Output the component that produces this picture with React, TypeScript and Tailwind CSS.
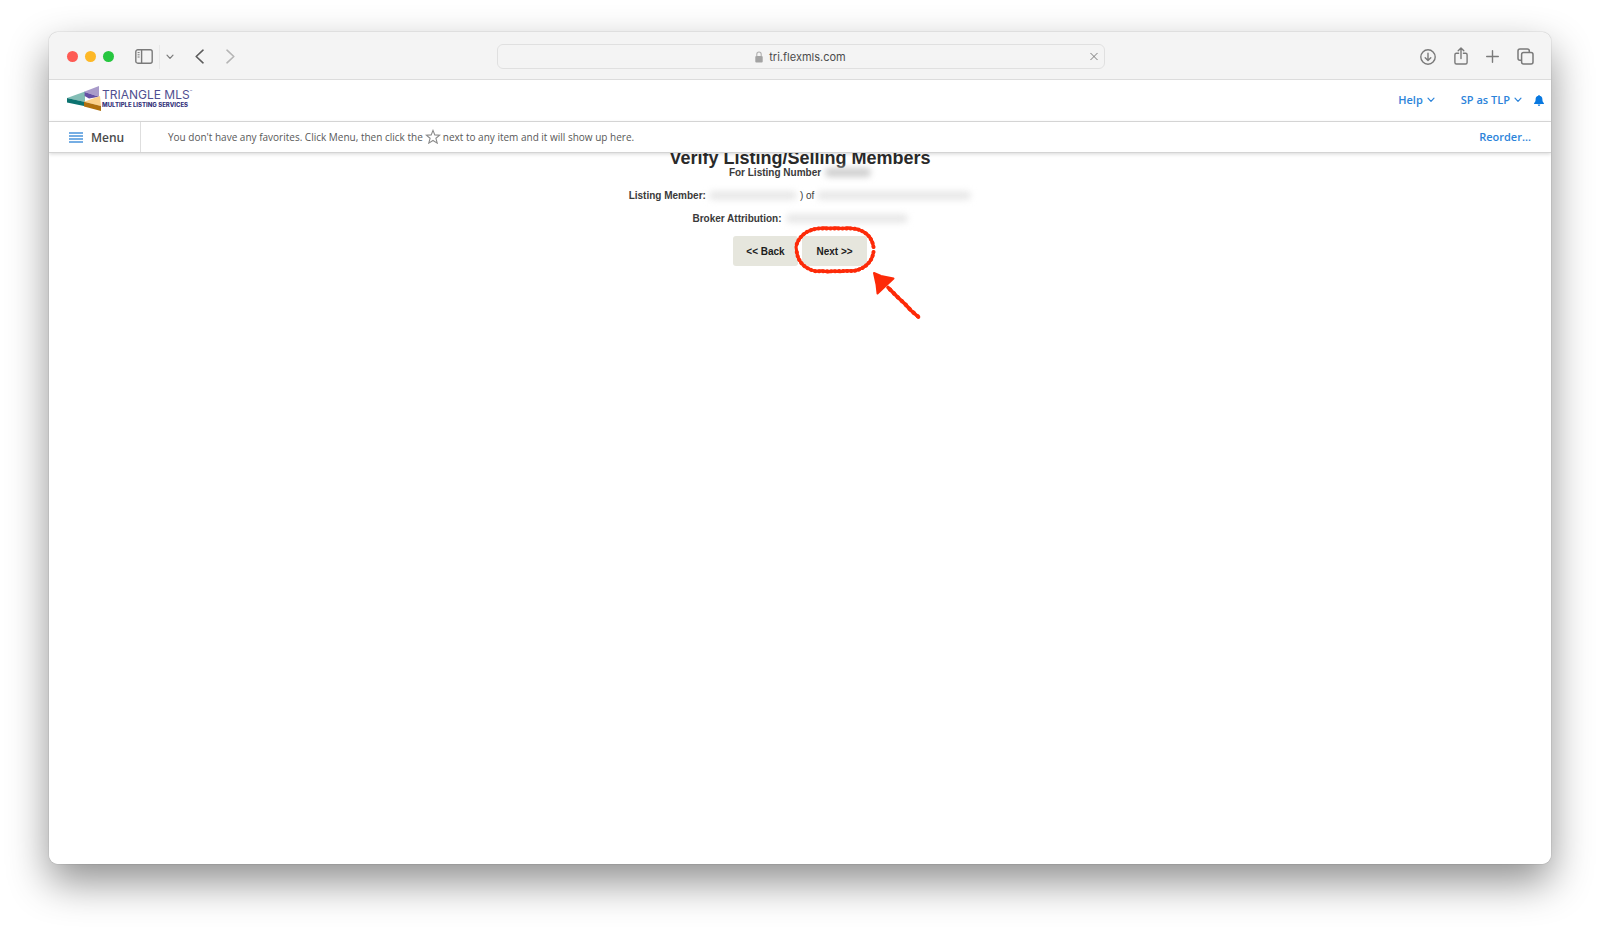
import type { ReactNode } from "react";

function Chevron({ className = "" }: { className?: string }) {
  return (
    <svg viewBox="0 0 8 6" className={`h-[6px] w-2 ${className}`} fill="none" stroke="currentColor" strokeWidth="1.2" strokeLinecap="round" strokeLinejoin="round">
      <path d="M1 1.2 4 4.4 7 1.2" />
    </svg>
  );
}

function IconButton({ label, className = "", children }: { label: string; className?: string; children: ReactNode }) {
  return (
    <button type="button" aria-label={label} className={`flex flex-shrink-0 items-center justify-center ${className}`}>
      {children}
    </button>
  );
}

function BrowserBar() {
  return (
    <div className="flex h-12 items-center justify-between border-b border-[#dcdcdc] bg-[#f4f4f4] pt-[2px] text-[#7a7a7a]">
      <div className="flex flex-1 items-center pl-[18px]">
        <div className="flex gap-[7px]">
          <span className="size-[11px] rounded-full bg-[#fe5b54]" />
          <span className="size-[11px] rounded-full bg-[#fdb827]" />
          <span className="size-[11px] rounded-full bg-[#26c63f]" />
        </div>
        <IconButton label="Sidebar" className="ml-[21px]">
          <svg viewBox="0 0 18 15" className="h-[15px] w-[18px]" fill="none" stroke="currentColor" strokeWidth="1.4">
            <rect x="0.8" y="0.8" width="16.4" height="13.4" rx="2" />
            <path d="M6.6 1v13" />
            <path d="M2.6 3.6h2M2.6 5.8h2M2.6 8h2" strokeWidth="1" />
          </svg>
        </IconButton>
        <span className="ml-[6px] h-6 w-px bg-[#e8e8e8]" />
        <IconButton label="Tab groups" className="ml-[6px]">
          <Chevron />
        </IconButton>
        <IconButton label="Back" className="ml-[21px]">
          <svg viewBox="0 0 9 15" className="h-[15px] w-[9px]" fill="none" stroke="#5c5c5c" strokeWidth="1.6" strokeLinecap="round" strokeLinejoin="round">
            <path d="M8 1.2 1.2 7.5 8 13.8" />
          </svg>
        </IconButton>
        <IconButton label="Forward" className="ml-[22px]">
          <svg viewBox="0 0 9 15" className="h-[15px] w-[9px]" fill="none" stroke="#b5b5b5" strokeWidth="1.6" strokeLinecap="round" strokeLinejoin="round">
            <path d="M1 1.2 7.8 7.5 1 13.8" />
          </svg>
        </IconButton>
      </div>

      <div className="flex h-[25px] w-[608px] items-center rounded-md border border-[#e0e0e0] px-[6px]">
        <div className="flex flex-1 items-center justify-center gap-[6px] pl-2">
          <svg viewBox="0 0 8 12" className="h-3 w-2">
            <rect x="0.3" y="5" width="7.4" height="6.4" rx="1" fill="#a3a3a3" />
            <path d="M1.8 5.4V3.2a2.2 2.2 0 0 1 4.4 0v2.2" fill="none" stroke="#b0b0b0" strokeWidth="1.1" />
          </svg>
          <span className="text-[11px] leading-4 text-[#4c4c4c]">tri.flexmls.com</span>
        </div>
        <IconButton label="Stop" className="w-2">
          <svg viewBox="0 0 9 9" className="size-[9px]" fill="none" stroke="currentColor" strokeWidth="1.1">
            <path d="m0.5 0.5 8 8M8.5 0.5l-8 8" />
          </svg>
        </IconButton>
      </div>

      <div className="flex flex-1 items-center justify-end gap-[18px] pr-[17px]">
        <IconButton label="Downloads">
          <svg viewBox="0 0 16 16" className="size-4" fill="none" stroke="currentColor" strokeWidth="1.4" strokeLinecap="round" strokeLinejoin="round">
            <circle cx="8" cy="8" r="7.2" />
            <path d="M8 4.2v7.2M5.2 8.8 8 11.5l2.8-2.7" />
          </svg>
        </IconButton>
        <IconButton label="Share">
          <svg viewBox="0 0 14 18" className="mb-px h-[18px] w-[14px]" fill="none" stroke="currentColor" strokeWidth="1.4" strokeLinecap="round" strokeLinejoin="round">
            <path d="M4.6 6.2H2.4A1.5 1.5 0 0 0 .9 7.7v7.8A1.5 1.5 0 0 0 2.4 17h9.2a1.5 1.5 0 0 0 1.5-1.5V7.7a1.5 1.5 0 0 0-1.5-1.5H9.4" />
            <path d="M7 11.5V1.2M4.2 3.8 7 1l2.8 2.8" />
          </svg>
        </IconButton>
        <IconButton label="New tab">
          <svg viewBox="0 0 13 13" className="size-[13px]" fill="none" stroke="currentColor" strokeWidth="1.4" strokeLinecap="round">
            <path d="M6.5 .7v11.6M.7 6.5h11.6" />
          </svg>
        </IconButton>
        <IconButton label="Show tabs">
          <svg viewBox="0 0 17 17" className="size-[17px]" fill="none" stroke="currentColor" strokeWidth="1.5" strokeLinejoin="round">
            <rect x="4.6" y="4.6" width="11.4" height="11.4" rx="2" />
            <path d="M4.6 12.3H3a2 2 0 0 1-2-2V3a2 2 0 0 1 2-2h7.3a2 2 0 0 1 2 2v1.6" />
          </svg>
        </IconButton>
      </div>
    </div>
  );
}

function Logo() {
  return (
    <a href="#" aria-label="Triangle MLS" className="flex items-center text-[#504f90]">
      <svg viewBox="0 0 34 25" className="h-[25px] w-[34px]">
        <path d="M0 12 18 5.6V16L0 12Z" fill="#83bdb5" />
        <path d="M0 12 17 15.8V20L0 16.4Z" fill="#0c7370" />
        <path d="M17 5.8 32 0v10.8Z" fill="#a99bca" />
        <path d="M17.6 6 32 10.8 22 12.4 17.6 10Z" fill="#6650a4" />
        <path d="M33 10 34 20 17 15.8Z" fill="#fbd08a" />
        <path d="M17 15.8 34 20V25L17 20.6Z" fill="#b0700e" />
      </svg>
      <span className="flex flex-col pl-px font-['Inter']">
        <span className="flex items-start text-[12px] leading-[12px]">
          TRIANGLE MLS<span className="text-[4px] leading-[6px]">™</span>
        </span>
        <span className="text-[6px] leading-[7px] font-extrabold text-[#35347c]">MULTIPLE LISTING SERVICES</span>
      </span>
    </a>
  );
}

function SiteHeader() {
  return (
    <header className="flex h-[42px] items-center justify-between border-b border-[#dcdcdc] bg-white pr-[7px] pb-1 pl-[18px]">
      <Logo />
      <div className="flex items-center pt-[3px] text-[11px] leading-4 font-semibold text-[#2c84da]">
        <button type="button" className="flex items-center gap-1">
          Help <Chevron />
        </button>
        <button type="button" className="ml-[26px] flex items-center gap-1">
          SP as TLP <Chevron />
        </button>
        <IconButton label="Notifications" className="ml-3">
          <svg viewBox="0 0 10 11" className="h-[11px] w-[10px]" fill="#0878e0">
            <path d="M5 0a.8.8 0 0 1 .8.7C7.6 1.1 8.4 2.5 8.4 4.2c0 2 .4 2.8 1.4 3.7.4.5.1 1.1-.5 1.1H.7C.1 9-.2 8.4.2 7.9c1-.9 1.4-1.7 1.4-3.7C1.6 2.5 2.4 1.1 4.2.7A.8.8 0 0 1 5 0ZM3.7 9.6h2.6a1.3 1.3 0 0 1-2.6 0Z" />
          </svg>
        </IconButton>
      </div>
    </header>
  );
}

function FavoritesBar() {
  return (
    <nav className="relative z-10 flex h-[31px] items-center border-b border-[#d4d4d4] bg-white shadow-[0_1px_4px_rgba(0,0,0,0.16)]">
      <button type="button" className="flex h-full w-[92px] items-center gap-2 border-r border-[#dedede] pt-px pl-5 text-[12px] leading-4 font-semibold text-[#4a4a4a]">
        <svg viewBox="0 0 14 11" className="h-[11px] w-[14px]" stroke="#4a94dc" strokeWidth="1.5">
          <path d="M0 1h14M0 4h14M0 7h14M0 10h14" />
        </svg>
        Menu
      </button>
      <p className="flex items-center pl-[27px] text-[10px] leading-4 text-[#585858]">
        You don't have any favorites. Click Menu, then click the
        <svg viewBox="0 0 16 16" className="mx-[2px] size-4" fill="none" stroke="#8a8a8a" strokeWidth="1.1" strokeLinejoin="miter">
          <path d="m8 1.4 1.8 4.5 4.9.3-3.8 3.1 1.3 4.8L8 11.5l-4.2 2.6 1.3-4.8-3.8-3.1 4.9-.3Z" />
        </svg>
        next to any item and it will show up here.
      </p>
      <a href="#" className="ml-auto pr-5 text-[11px] leading-4 font-semibold text-[#2c84da]">
        Reorder...
      </a>
    </nav>
  );
}

// Smudge drawn where a private value is hidden
function Redacted({ className }: { className: string }) {
  return <span className={`h-[9px] rounded-full blur-[3px] ${className}`} />;
}

function VerifyMembers() {
  return (
    <main className="-mt-[2px] flex flex-1 flex-col items-center bg-white font-['Liberation_Sans',sans-serif] text-[10px] leading-[13px] text-[#3a3a3a]">
      <h1 className="text-[18px] leading-[15px] font-bold text-[#2a2a2a]">Verify Listing/Selling Members</h1>
      <p className="flex items-center gap-1 font-bold">
        For Listing Number <Redacted className="w-[46px] bg-[#cfcfcf]" />
      </p>
      <p className="mt-[10px] flex items-center gap-[3px]">
        <b>Listing Member:</b>
        <Redacted className="w-[88px] bg-[#e8e8e8]" />
        <span>) of</span>
        <Redacted className="w-[154px] bg-[#e8e8e8]" />
      </p>
      <p className="mt-[10px] flex items-center gap-1">
        <b>Broker Attribution:</b>
        <Redacted className="w-[122px] bg-[#e8e8e8]" />
      </p>
      <div className="relative mt-[11px] flex gap-1">
        <button type="button" className="h-[30px] w-[65px] rounded-[3px] bg-[#e6e6dd] font-bold text-[#1c1c1c]">
          {"<< Back"}
        </button>
        <button type="button" className="h-[30px] w-[65px] rounded-[3px] bg-[#e6e6dd] font-bold text-[#1c1c1c]">
          {"Next >>"}
        </button>
        <svg viewBox="0 0 128 96" className="pointer-events-none absolute -top-[10px] left-[61px] h-24 w-32" fill="none" stroke="#fd2a08" strokeLinecap="round" strokeLinejoin="round">
          <path d="M79.500 21C78 11 71 4 59 2.500L54 1.800 48 2.500 42 1.700 36 2.300 30 1.800 24 2.500C12 4 4 11 2 21L2.800 26C4 36 11 43 22 45.300L28 44.700 34 46 40 45 46 45.700 52 44.700 60 44.700C71 42.500 78 36 79.500 26" strokeWidth="3" />
          <path d="M79.500 21C78 11 71 4 59 2.500L24 2.500C12 4 4 11 2 21M2.800 26C4 36 11 43 22 45.300L60 45C71 42.500 78 36 79.500 26" strokeWidth="4" strokeDasharray="0.5 3.5" />
          <path d="M124.500 91 117 84.500l-6-6.500-7-6.500-10-10" strokeWidth="3.600" />
          <path d="m124 90.500-7-6-6-6.500-7-6.500-8-8" strokeWidth="4.200" strokeDasharray="0.5 5" />
          <path d="m80 47 7 3 12.500 2.500-7.500 7-8.500 8-1-9Z" fill="#fd2a08" strokeWidth="2" />
        </svg>
      </div>
    </main>
  );
}

export default function App() {
  return (
    <div className="flex min-h-screen bg-white px-[49px] pt-8 pb-[68px] font-['Open_Sans',sans-serif]">
      <div className="flex flex-1 flex-col overflow-hidden rounded-[9px] bg-white shadow-[0_0_1px_rgba(0,0,0,0.5),0_18px_40px_rgba(0,0,0,0.44)]">
        <div className="font-['Inter',sans-serif]">
          <BrowserBar />
        </div>
        <SiteHeader />
        <FavoritesBar />
        <VerifyMembers />
      </div>
    </div>
  );
}
